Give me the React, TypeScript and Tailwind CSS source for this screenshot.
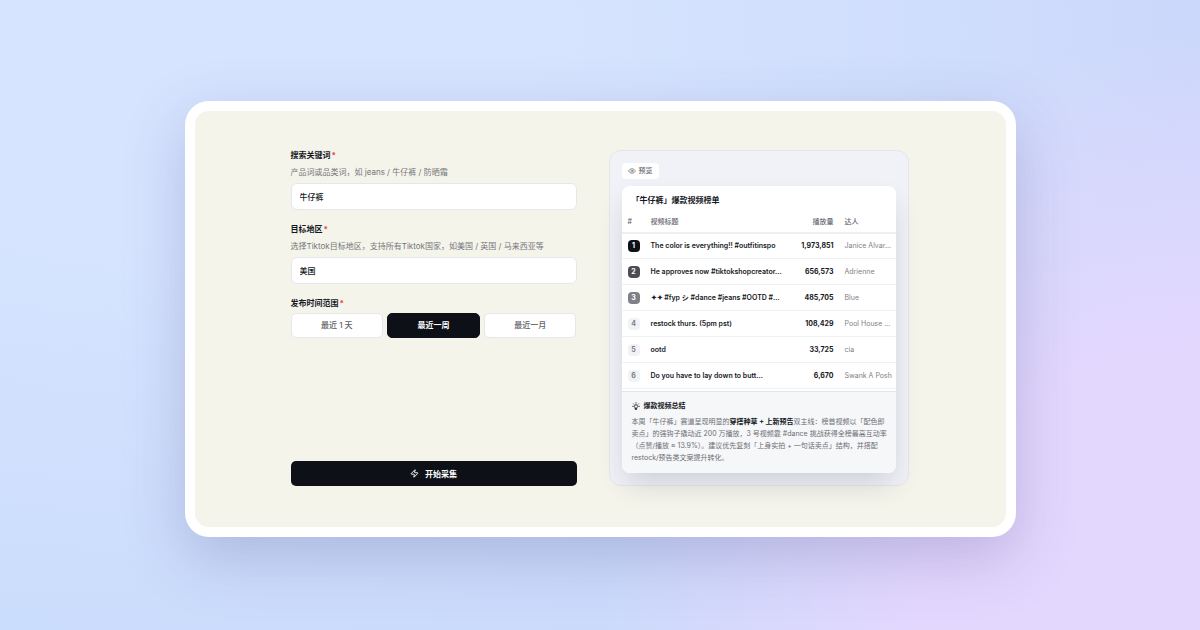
import { useState } from 'react'
import { Eye, Zap } from 'lucide-react'
import { clsx } from 'clsx'

const ranges = ['最近 1 天', '最近一周', '最近一月']

const videos = [
  { title: 'The color is everything!! #outfitinspo', views: 1973851, creator: 'Janice Alvar…' },
  { title: 'He approves now #tiktokshopcreator…', views: 656573, creator: 'Adrienne' },
  { title: '✦✦ #fyp シ #dance #jeans #OOTD #…', views: 485705, creator: 'Blue' },
  { title: 'restock thurs. (5pm pst)', views: 108429, creator: 'Pool House …' },
  { title: 'ootd', views: 33725, creator: 'cia' },
  { title: 'Do you have to lay down to butt…', views: 6670, creator: 'Swank A Posh' },
]

const rankStyles = ['bg-[#0d1117] text-white', 'bg-[#4b4d52] text-white', 'bg-[#808186] text-white']

function BulbIcon() {
  return (
    <svg
      viewBox="0 0 24 24"
      className="h-2 w-2"
      fill="none"
      stroke="currentColor"
      strokeWidth="2.6"
      strokeLinecap="round"
      strokeLinejoin="round"
      aria-hidden="true"
    >
      <path d="M9.500 17.500a5 5 0 1 1 5 0v2h-5zM10.500 22.500h3M12 2v1.500M4.500 5.500l1 1M19.500 5.500l-1 1M2 13h1.500M20.500 13H22" />
    </svg>
  )
}

function Label({ htmlFor, children }: { htmlFor: string; children: string }) {
  return (
    <label htmlFor={htmlFor} className="block font-bold leading-[10px] text-[#15181e]">
      {children}
      <span className="ml-px text-[#ef4444]">*</span>
    </label>
  )
}

function Field({ id, label, hint, initial }: { id: string; label: string; hint: string; initial: string }) {
  return (
    <div>
      <Label htmlFor={id}>{label}</Label>
      <p className="mt-1.5 leading-3 text-[#74767a]">{hint}</p>
      <input
        id={id}
        type="text"
        defaultValue={initial}
        className="mt-[5px] block h-[27px] w-full rounded-md border border-[#e5e7eb] bg-white px-2 font-medium text-[#15181e] outline-none"
      />
    </div>
  )
}

function SearchForm() {
  const [range, setRange] = useState(ranges[1])

  return (
    <form className="flex flex-col gap-3.5" onSubmit={(e) => e.preventDefault()}>
      <Field id="keyword" label="搜索关键词" hint="产品词或品类词，如 jeans / 牛仔裤 / 防晒霜" initial="牛仔裤" />
      <Field
        id="region"
        label="目标地区"
        hint="选择Tiktok目标地区，支持所有Tiktok国家，如美国 / 英国 / 马来西亚等"
        initial="美国"
      />
      <div role="group" aria-labelledby="range-label">
        <div id="range-label" className="font-bold leading-[10px] text-[#15181e]">
          发布时间范围
          <span className="ml-px text-[#ef4444]">*</span>
        </div>
        <div className="mt-[5px] grid grid-cols-3 gap-1">
          {ranges.map((item) => (
            <button
              key={item}
              type="button"
              aria-pressed={item === range}
              onClick={() => setRange(item)}
              className={clsx(
                'h-[25px] rounded-[5px] border',
                item === range
                  ? 'border-[#0d1117] bg-[#0d1117] font-bold text-white'
                  : 'border-[#e5e7eb] bg-white font-medium text-[#5f6167]'
              )}
            >
              {item}
            </button>
          ))}
        </div>
      </div>
      <button
        type="submit"
        className="mt-auto flex h-[25px] items-center justify-center gap-1.5 rounded-[5px] bg-[#0d1117] font-bold text-white"
      >
        <Zap className="h-[9px] w-[9px]" strokeWidth={2.5} />
        开始采集
      </button>
    </form>
  )
}

function RankingTable() {
  return (
    <table className="w-full table-fixed border-collapse text-[7px]">
      <colgroup>
        <col className="w-[23px]" />
        <col />
        <col className="w-[46px]" />
        <col className="w-[62px]" />
      </colgroup>
      <thead>
        <tr className="h-[21px] border-b-2 border-[#eeeff2] text-left text-[#66686e]">
          <th className="pl-1.5 font-medium">#</th>
          <th className="pl-1.5 font-medium">视频标题</th>
          <th className="text-right font-medium">播放量</th>
          <th className="pl-[11px] font-medium">达人</th>
        </tr>
      </thead>
      <tbody>
        {videos.map((video, i) => (
          <tr key={video.title} className="h-[26px] border-b border-[#f0f1f4]">
            <td className="pl-1.5">
              <span
                className={clsx(
                  'flex h-3 w-3 items-center justify-center rounded-[4px] font-bold leading-3',
                  rankStyles[i] ?? 'bg-[#f1f2f6] text-[#7c7e84]'
                )}
              >
                {i + 1}
              </span>
            </td>
            <td className="whitespace-nowrap pl-1.5 font-semibold text-[#15181e]">{video.title}</td>
            <td className="text-right font-bold text-[#15181e]">{video.views.toLocaleString('en-US')}</td>
            <td className="whitespace-nowrap pl-[11px] text-[#808186]">{video.creator}</td>
          </tr>
        ))}
      </tbody>
    </table>
  )
}

function Preview() {
  return (
    <section className="rounded-xl border border-[#e4e6ea] bg-[#f0f2f7] p-3">
      <div className="inline-flex h-4 items-center gap-[3px] rounded-[4px] bg-white px-1.5 align-top text-[7px] font-medium text-[#66686e]">
        <Eye className="h-2 w-2" />
        预览
      </div>
      <div className="mt-[7px] overflow-hidden rounded-lg bg-white shadow-[0_14px_28px_-4px_rgba(30,30,60,0.16)]">
        <h2 className="px-2.5 pt-[7px] font-bold leading-3.5 text-[#15181e]">「牛仔裤」爆款视频榜单</h2>
        <div className="pb-0.5 pt-[5px]">
          <RankingTable />
        </div>
        <div className="border-t border-[#e2e4e8] bg-[#f6f7f9] pb-[9px] pl-2.5 pr-2 pt-2">
          <h3 className="flex items-center gap-1 text-[7px] font-bold leading-3 text-[#15181e]">
            <BulbIcon />
            爆款视频总结
          </h3>
          <p className="mt-1 text-[7px] leading-3 text-[#6b6d73]">
            本周「牛仔裤」赛道呈现明显的<strong className="text-[#15181e]">穿搭种草 + 上新预告</strong>
            双主线：榜首视频以「配色即卖点」的强钩子撬动近 200 万播放，3 号视频靠 #dance 挑战获得全榜最高互动率（点赞/播放
            ≈ 13.9%）。建议优先复刻「上身实拍 + 一句话卖点」结构，并搭配 restock/预告类文案提升转化。
          </p>
        </div>
      </div>
    </section>
  )
}

export default function App() {
  return (
    <main
      lang="zh-CN"
      className="flex min-h-screen items-center justify-center bg-[radial-gradient(circle_at_100%_100%,#e4d7fe_0%,#e4d7fe_20%,transparent_44%),radial-gradient(ellipse_at_15%_5%,#d6e4ff_0%,#d6e4ff_25%,transparent_70%),linear-gradient(90deg,#cbddfc,#ccd8fb)] px-6 pb-0 pt-2 font-[Inter,'Noto_Sans_CJK_SC',sans-serif] text-[8px]"
    >
      <div className="w-full max-w-[831px] rounded-3xl bg-white p-2.5 shadow-[0_20px_60px_rgba(70,70,140,0.25)]">
        <div className="grid grid-cols-[286fr_300fr] gap-8 rounded-[14px] bg-[#f4f4eb] pb-[41px] pl-24 pr-[97px] pt-[39px]">
          <SearchForm />
          <Preview />
        </div>
      </div>
    </main>
  )
}
